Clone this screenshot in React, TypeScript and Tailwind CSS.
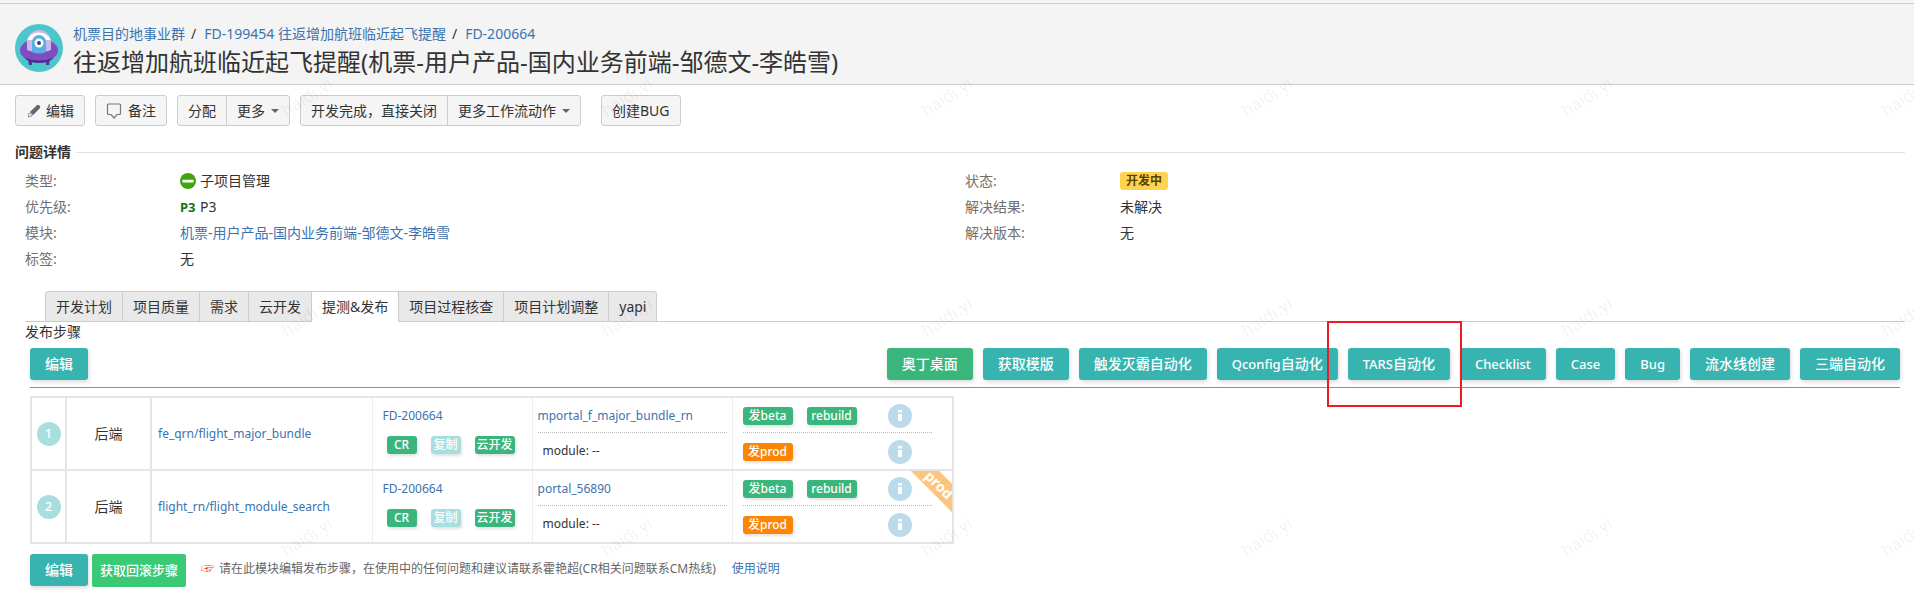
import type { ReactNode } from "react";

const linkCls = "text-[#3b73af] hover:underline";

function Avatar() {
  return (
    <svg viewBox="0 0 48 48" className="size-12 shrink-0" role="img" aria-label="avatar">
      <circle cx="24" cy="24" r="24" fill="#4bc6ca" />
      <path d="M13 35h4v6h-3zM31 35h4l-1 6h-3z" fill="#5c2f9e" />
      <ellipse cx="24" cy="26.500" rx="19" ry="11.500" fill="#7f4dc2" />
      <path d="M9 33.500q15 6 30 0-5 5.500-15 5.500T9 33.500z" fill="#4f2a94" />
      <path d="M12 26V18a12 12 0 0 1 24 0v8q-12 5-24 0z" fill="#cdb9e8" />
      <path d="M12.500 16a12 10.500 0 0 1 23 0z" fill="#fff" />
      <path d="M17 28V18a7 7 0 0 1 14 0v10q-7 3-14 0z" fill="#5aaee6" />
      <circle cx="24" cy="19" r="4.500" fill="#fff" />
      <circle cx="24" cy="19" r="2" fill="#2c4a6e" />
    </svg>
  );
}

function PencilIcon() {
  return (
    <svg viewBox="0 0 16 16" className="size-4" aria-hidden="true">
      <path d="M10.800 2.300q1.200-1.200 2.400 0l.6.6q1.200 1.200 0 2.400L7 12.200 3.900 9z" fill="#666" />
      <path d="M3.200 9.900l2.900 3-3.900 1z" fill="#fff" stroke="#777" strokeWidth=".8" />
    </svg>
  );
}

function CommentIcon() {
  return (
    <svg viewBox="0 0 16 18" className="mr-0.5 h-[18px] w-4" fill="none" stroke="#777" strokeWidth="1.200" aria-hidden="true">
      <path d="M2.500 2h11a1 1 0 0 1 1 1v8.500a1 1 0 0 1-1 1h-2.500L8 16l-3-3.500H2.500a1 1 0 0 1-1-1V3a1 1 0 0 1 1-1z" />
    </svg>
  );
}

function Caret() {
  return (
    <svg viewBox="0 0 8 4" className="ml-0.5 h-1 w-2" aria-hidden="true">
      <path d="M0 0h8L4 4z" fill="#666" />
    </svg>
  );
}

function SubTaskIcon() {
  return (
    <svg viewBox="0 0 16 16" className="size-4" aria-hidden="true">
      <circle cx="8" cy="8" r="8" fill="#3fa50a" />
      <rect x="2.500" y="6.700" width="11" height="2.800" rx=".5" fill="#fff" />
    </svg>
  );
}

function ToolButton({ children, pos = "single" }: { children: ReactNode; pos?: "single" | "first" | "last" }) {
  const shape = { single: "rounded-[3px]", first: "rounded-l-[3px]", last: "-ml-px rounded-r-[3px]" }[pos];
  return (
    <button type="button" className={`flex h-[31px] items-center gap-1 border border-[#ccc] bg-[#f5f5f5] px-2.5 text-sm text-[#333] ${shape}`}>
      {children}
    </button>
  );
}

function Action({ children, green = false, small = false }: { children: ReactNode; green?: boolean; small?: boolean }) {
  return (
    <button
      type="button"
      className={`h-8 rounded-[3px] px-[15px] font-medium whitespace-nowrap text-white shadow-[1px_2px_4px_rgba(0,0,0,0.15)] ${green ? "bg-[#3ab67d]" : "bg-[#37b4af]"} ${small ? "text-[13px]" : "text-sm"}`}
    >
      {children}
    </button>
  );
}

function Chip({ children, className }: { children: ReactNode; className: string }) {
  return (
    <button type="button" className={`h-[18px] rounded-[3px] text-center text-xs leading-[18px] font-medium whitespace-nowrap text-white shadow-[1px_2px_3px_rgba(0,0,0,0.12)] ${className}`}>
      {children}
    </button>
  );
}

function InfoDot() {
  return (
    <button type="button" aria-label="info" className="flex size-6 items-center justify-center rounded-full bg-[#bbdbea]">
      <svg viewBox="0 0 4 11" className="h-[11px] w-1" aria-hidden="true">
        <path d="M0 0h4v2.500H0zM0 4h4v7H0z" fill="#fff" />
      </svg>
    </button>
  );
}

function Field({ label, children }: { label: string; children: ReactNode }) {
  return (
    <div className="flex h-[26px] items-center">
      <dt className="w-[155px] shrink-0 text-[#707070]">{label}</dt>
      <dd className="flex items-center gap-1">{children}</dd>
    </div>
  );
}

const tabs = ["开发计划", "项目质量", "需求", "云开发", "提测&发布", "项目过程核查", "项目计划调整", "yapi"];

const steps = [
  { id: 1, repo: "fe_qrn/flight_major_bundle", portal: "mportal_f_major_bundle_rn", prod: false },
  { id: 2, repo: "flight_rn/flight_module_search", portal: "portal_56890", prod: true },
];

function Steps() {
  return (
    <table className="mt-2 w-[924px] table-fixed border-collapse border-2 border-[#e5e5e5] text-xs">
      <colgroup>
        <col className="w-[35px]" />
        <col className="w-[85px]" />
        <col className="w-[221px]" />
        <col className="w-[160px]" />
        <col className="w-[200px]" />
        <col />
      </colgroup>
      <tbody>
        {steps.map((s) => (
          <tr key={s.id} className="h-[73px] border-2 border-[#e5e5e5]">
            <td className="border-r-2 border-[#e5e5e5]">
              <span className="mx-auto flex size-6 items-center justify-center rounded-full bg-[#a9dedf] text-[13px] font-medium text-white">{s.id}</span>
            </td>
            <td className="border-r-2 border-[#e5e5e5] text-center text-sm">后端</td>
            <td className="border-r border-[#eee] pl-1.5">
              <a href="#repo" className={linkCls}>{s.repo}</a>
            </td>
            <td className="border-r border-[#eee] pb-1.5 pl-2.5">
              <div className="flex flex-col gap-3">
                <a href="#issue" className={linkCls}>FD-200664</a>
                <div className="flex gap-3.5 pl-1">
                  <Chip className="w-[30px] bg-[#3ab67d]">CR</Chip>
                  <Chip className="w-[30px] bg-[#a9dedf]">复制</Chip>
                  <Chip className="w-10 bg-[#3ab67d]">云开发</Chip>
                </div>
              </div>
            </td>
            <td className="border-r border-[#eee] px-[5px]">
              <div className="border-b border-dotted border-[#bbb] pb-2">
                <a href="#portal" className={linkCls}>{s.portal}</a>
              </div>
              <div className="pt-2.5 pl-[5px] text-[#333]">module: --</div>
            </td>
            <td className="relative overflow-hidden pr-5 pl-2.5">
              <div className="flex items-center border-b border-dotted border-[#bbb] pb-1">
                <Chip className="w-[50px] bg-[#3ab67d]">发beta</Chip>
                <Chip className="ml-3.5 w-[50px] bg-[#3ab67d]">rebuild</Chip>
                <span className="ml-[31px] flex"><InfoDot /></span>
              </div>
              <div className="flex items-center pt-[7px]">
                <Chip className="w-[50px] bg-[#fb8604]">发prod</Chip>
                <span className="ml-[95px] flex"><InfoDot /></span>
              </div>
              {s.prod && (
                <span className="absolute top-[4px] -right-[27px] h-5 w-20 rotate-45 bg-[#fcc57f] text-center text-sm leading-5 font-bold text-white">prod</span>
              )}
            </td>
          </tr>
        ))}
      </tbody>
    </table>
  );
}

function Watermark() {
  return (
    <div aria-hidden="true" className="pointer-events-none absolute -top-[13px] bottom-0 left-[147px] grid auto-rows-[220px] grid-cols-[repeat(6,320px)] overflow-hidden">
      {Array.from({ length: 18 }, (_, i) => (
        <span key={i} className="flex items-center justify-center">
          <span className="-rotate-[33deg] font-[Roboto] text-lg leading-5 text-black/6">haidi.yi</span>
        </span>
      ))}
    </div>
  );
}

export default function App() {
  return (
    <div className="relative min-h-screen overflow-hidden bg-white font-['Noto_Sans','Noto_Sans_CJK_SC',sans-serif] text-sm leading-5 text-[#333]">
      <header className="border-b border-[#ccc] bg-[#f4f4f4]">
        <div className="h-1 border-b border-[#ccc]" />
        <div className="flex h-20 items-start gap-2.5 px-[15px] pt-5">
          <Avatar />
          <div>
            <nav className="flex gap-1.5 whitespace-nowrap">
              <a href="#group" className={linkCls}>机票目的地事业群</a>
              <span className="mr-0.5">/</span>
              <a href="#parent" className={linkCls}>FD-199454 往返增加航班临近起飞提醒</a>
              <span className="mr-0.5">/</span>
              <a href="#issue" className={linkCls}>FD-200664</a>
            </nav>
            <h1 className="mt-0.5 text-2xl leading-8">往返增加航班临近起飞提醒(机票-用户产品-国内业务前端-邹德文-李皓雪)</h1>
          </div>
        </div>
      </header>

      <div className="flex gap-2.5 px-[15px] pt-2.5">
        <ToolButton><PencilIcon />编辑</ToolButton>
        <ToolButton><CommentIcon />备注</ToolButton>
        <div className="flex">
          <ToolButton pos="first">分配</ToolButton>
          <ToolButton pos="last">更多<Caret /></ToolButton>
        </div>
        <div className="flex">
          <ToolButton pos="first">开发完成，直接关闭</ToolButton>
          <ToolButton pos="last">更多工作流动作<Caret /></ToolButton>
        </div>
        <div className="ml-2.5"><ToolButton>创建BUG</ToolButton></div>
      </div>

      <section className="pr-[9px] pl-[15px]">
        <div className="flex items-center gap-[5px] pt-4">
          <h2 className="font-bold">问题详情</h2>
          <div className="h-px flex-1 bg-[#e2e2e2]" />
        </div>
        <div className="grid grid-cols-2 pt-1.5 pl-2.5">
          <dl>
            <Field label="类型:"><SubTaskIcon />子项目管理</Field>
            <Field label="优先级:"><b className="w-4 text-[13px] text-[#14751a]">P3</b>P3</Field>
            <Field label="模块:"><a href="#module" className={linkCls}>机票-用户产品-国内业务前端-邹德文-李皓雪</a></Field>
            <Field label="标签:">无</Field>
          </dl>
          <dl>
            <Field label="状态:"><span className="rounded-[3px] bg-[#ffd351] px-1.5 text-xs leading-[18px] font-bold text-[#594300]">开发中</span></Field>
            <Field label="解决结果:">未解决</Field>
            <Field label="解决版本:">无</Field>
          </dl>
        </div>
      </section>

      <section className="mt-[19px] pr-[9px] pl-[25px]">
        <div role="tablist" className="flex border-b border-[#ccc] pl-5">
          {tabs.map((t, i) => (
            <button
              key={t}
              type="button"
              role="tab"
              aria-selected={i === 4}
              className={`-mb-px h-[31px] border border-[#ccc] px-2.5 first:rounded-tl-[3px] last:rounded-tr-[3px] not-first:-ml-px ${i === 4 ? "border-b-white bg-white" : "bg-[#e9e9e9]"}`}
            >
              {t}
            </button>
          ))}
        </div>
        <h3>发布步骤</h3>
        <div className="pr-[5px] pl-[5px]">
          <div className="flex justify-between border-b border-[#8f8f8f] pt-1.5 pb-[7px]">
            <Action>编辑</Action>
            <div className="flex gap-2.5">
              <Action green>奥丁桌面</Action>
              <Action>获取模版</Action>
              <Action>触发灭霸自动化</Action>
              <Action small>Qconfig<span className="text-sm">自动化</span></Action>
              <div className="relative flex">
                <Action small>TARS<span className="text-sm">自动化</span></Action>
                <div className="pointer-events-none absolute -top-[27px] -right-3 -bottom-[27px] -left-[21px] z-10 border-2 border-[#ed1c24]" />
              </div>
              <Action small>Checklist</Action>
              <Action small>Case</Action>
              <Action small>Bug</Action>
              <Action>流水线创建</Action>
              <Action>三端自动化</Action>
            </div>
          </div>
          <Steps />
          <div className="flex items-start gap-1 pt-2.5 text-xs">
            <Action>编辑</Action>
            <button type="button" className="h-[33px] rounded-[2px] bg-[#3aca76] px-2 text-[13px] font-medium text-white">获取回滚步骤</button>
            <p className="ml-[11px] pt-1.5 text-[#666]">
              <span className="mr-1 text-sm leading-4 text-[#ff4b1f]">☞</span>
              请在此模块编辑发布步骤，在使用中的任何问题和建议请联系霍艳超(CR相关问题联系CM热线)
              <a href="#help" className={`ml-4 ${linkCls}`}>使用说明</a>
            </p>
          </div>
        </div>
      </section>
      <Watermark />
    </div>
  );
}
